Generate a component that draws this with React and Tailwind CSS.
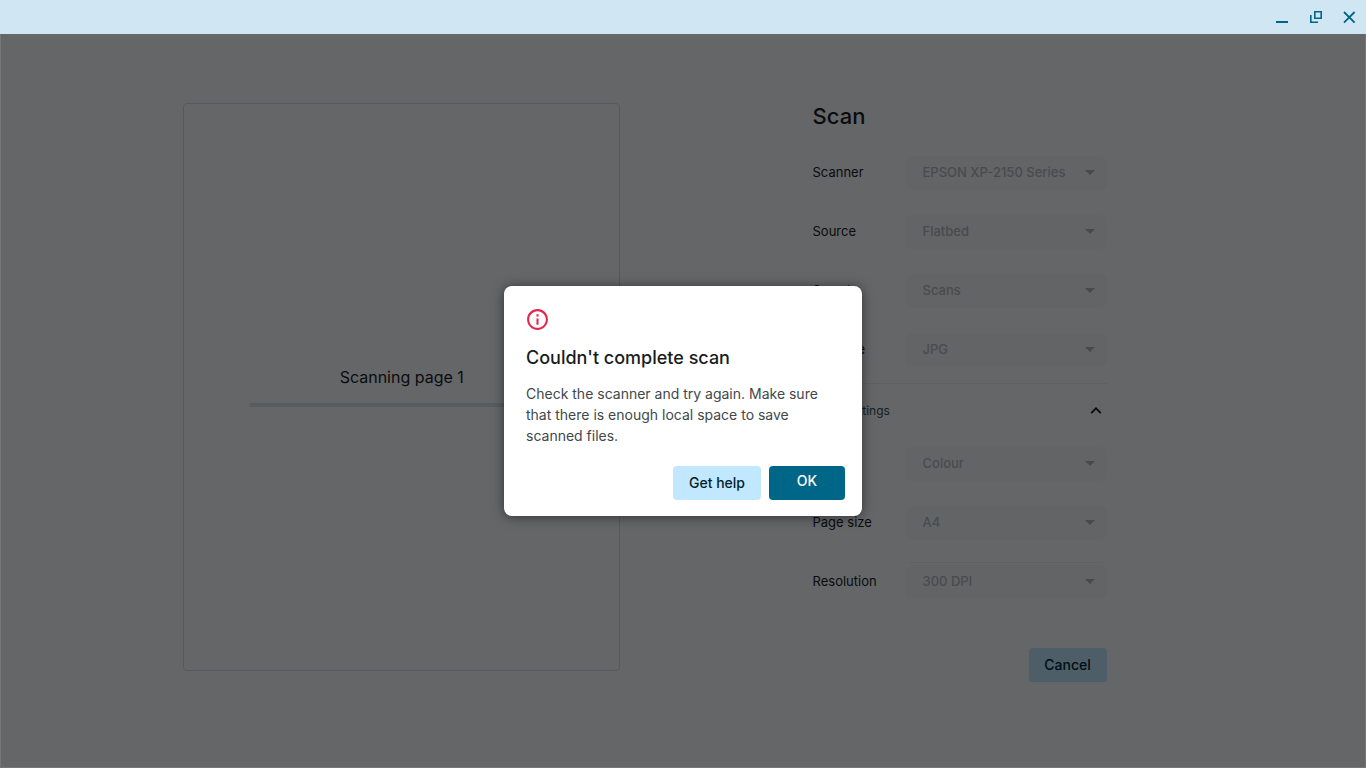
import { useState } from 'react'

const SCAN_FIELDS = [
  { id: 'scanner', label: 'Scanner', value: 'EPSON XP-2150 Series' },
  { id: 'source', label: 'Source', value: 'Flatbed' },
  { id: 'scan-to', label: 'Scan to', value: 'Scans' },
  { id: 'file-type', label: 'File type', value: 'JPG' },
]

const MORE_FIELDS = [
  { id: 'colour', label: 'Colour', value: 'Colour' },
  { id: 'page-size', label: 'Page size', value: 'A4' },
  { id: 'resolution', label: 'Resolution', value: '300 DPI', divider: true },
]

export default function App() {
  const [dialogOpen, setDialogOpen] = useState(true)

  return (
    <div className="flex flex-col min-h-screen font-['Inter','Liberation_Sans',sans-serif] text-[#191c1e]">
      <TitleBar />

      <div className="relative flex flex-1">
        <main className="grid flex-1 grid-cols-[10fr_7fr] bg-[#fcfdff]">
          <ScanPreview />
          <SettingsPanel />
        </main>

        {dialogOpen && <ErrorDialog onClose={() => setDialogOpen(false)} />}
      </div>
    </div>
  )
}

/**
 * Window frame with minimise / restore / close
 */
function TitleBar() {
  return (
    <header className="flex h-[34px] items-center justify-end gap-[10px] bg-[#d1e6f3] pr-1 text-[#006688]">
      <button aria-label="Minimise" className="flex size-6 items-center justify-center">
        <svg viewBox="0 0 24 24" className="size-6" fill="currentColor">
          <path d="M6 16h12v2H6z" />
        </svg>
      </button>
      <button aria-label="Restore" className="flex size-6 items-center justify-center">
        <svg viewBox="0 0 24 24" className="size-6" fill="none" stroke="currentColor" strokeWidth="1.6">
          <path d="M10.8 6.8h6.4v6.4h-6.4z" />
          <path d="M6.8 10v7.2H14" />
        </svg>
      </button>
      <button aria-label="Close" className="flex size-6 items-center justify-center">
        <svg viewBox="0 0 24 24" className="size-6" fill="none" stroke="currentColor" strokeWidth="1.8">
          <path d="M6 7l10.6 10.6M16.6 7L6 17.6" />
        </svg>
      </button>
    </header>
  )
}

/**
 * Page preview with scan progress
 */
function ScanPreview() {
  return (
    <section className="flex justify-center pt-[69px]">
      <div className="flex h-[568px] w-[437px] flex-col items-center justify-center rounded border border-[#dadce0] px-[65px] pb-0.5">
        <p className="text-base leading-6">Scanning page 1</p>
        <div
          role="progressbar"
          aria-label="Scanning page 1"
          className="mt-[14px] h-1 w-full rounded-full bg-[#cfe5f2]"
        />
      </div>
    </section>
  )
}

/**
 * Scan settings column
 */
function SettingsPanel() {
  return (
    <section className="w-[303px] pt-[66px] pl-[9px]">
      <h1 className="text-[22px] leading-8 font-medium">Scan</h1>

      <div className="mt-6 flex flex-col gap-[25px]">
        {SCAN_FIELDS.map((field) => (
          <SelectRow key={field.id} {...field} />
        ))}
      </div>

      <button className="mt-4 flex h-[54px] w-full items-center justify-between border-t border-[#eceef0] pr-1 text-xs text-[#40484c]">
        More settings
        <svg viewBox="0 0 14 14" className="size-[14px]" fill="none" stroke="#191c1e" strokeWidth="1.9">
          <path d="M2.2 9.2L7 4.4l4.8 4.8" />
        </svg>
      </button>

      <div className="mt-[10px] flex flex-col gap-[25px]">
        {MORE_FIELDS.map((field) => (
          <SelectRow key={field.id} {...field} />
        ))}
      </div>

      <div className="mt-[49px] flex justify-end">
        <button className="h-[34px] w-[78px] rounded bg-[#c2e8ff] text-sm font-medium text-[#001e2b]">
          Cancel
        </button>
      </div>
    </section>
  )
}

/**
 * Label + disabled drop-down
 */
function SelectRow({ id, label, value, divider }) {
  return (
    <div className="flex items-center justify-between">
      <label htmlFor={id} className="text-[13px]">
        {label}
      </label>
      <div className="relative w-[201px]">
        {divider && <div className="absolute inset-x-1 -top-[3px] h-px bg-[#eceef0]" />}
        <select
          id={id}
          disabled
          className="h-[34px] w-full appearance-none rounded-md bg-[#f7f8fa] pl-[17px] text-[13px] font-medium text-[#b6b8ba] opacity-100"
        >
          <option>{value}</option>
        </select>
        <svg
          viewBox="0 0 10 5"
          className="pointer-events-none absolute top-[14px] right-3 h-[5px] w-[10px]"
          fill="#b2b4b6"
        >
          <path d="M0 0h10L5 5z" />
        </svg>
      </div>
    </div>
  )
}

/**
 * Scan failed dialog over a dark scrim
 */
function ErrorDialog({ onClose }) {
  return (
    <div className="absolute inset-0 flex items-center justify-center border border-[#858688]/50 border-t-0 bg-[#000204]/60">
      <div
        role="alertdialog"
        aria-labelledby="dialog-title"
        aria-describedby="dialog-body"
        className="w-[358px] rounded-lg bg-white pt-[21px] pr-[17px] pb-4 pl-[22px] shadow-[0_1px_12px_rgba(0,0,0,0.5)]"
      >
        <svg viewBox="0 0 24 24" className="-ml-px size-[25px]" fill="#e3264a">
          <path d="M11 7h2v2h-2zm0 4h2v6h-2zm1-9C6.48 2 2 6.48 2 12s4.48 10 10 10 10-4.48 10-10S17.52 2 12 2zm0 18c-4.41 0-8-3.59-8-8s3.59-8 8-8 8 3.59 8 8-3.59 8-8 8z" />
        </svg>
        <h2 id="dialog-title" className="mt-3 text-lg leading-7 font-medium">
          Couldn't complete scan
        </h2>
        <p id="dialog-body" className="mt-[11px] text-sm leading-[21px] text-[#40484c]">
          Check the scanner and try again. Make sure that there is enough local space to save scanned files.
        </p>
        <div className="mt-5 flex justify-end gap-2">
          <button className="h-[34px] w-[88px] rounded bg-[#c2e8ff] text-sm font-medium text-[#001e2b]">
            Get help
          </button>
          <button
            onClick={onClose}
            className="h-[34px] w-[76px] rounded bg-[#006688] pb-1 text-sm font-medium text-white"
          >
            OK
          </button>
        </div>
      </div>
    </div>
  )
}
